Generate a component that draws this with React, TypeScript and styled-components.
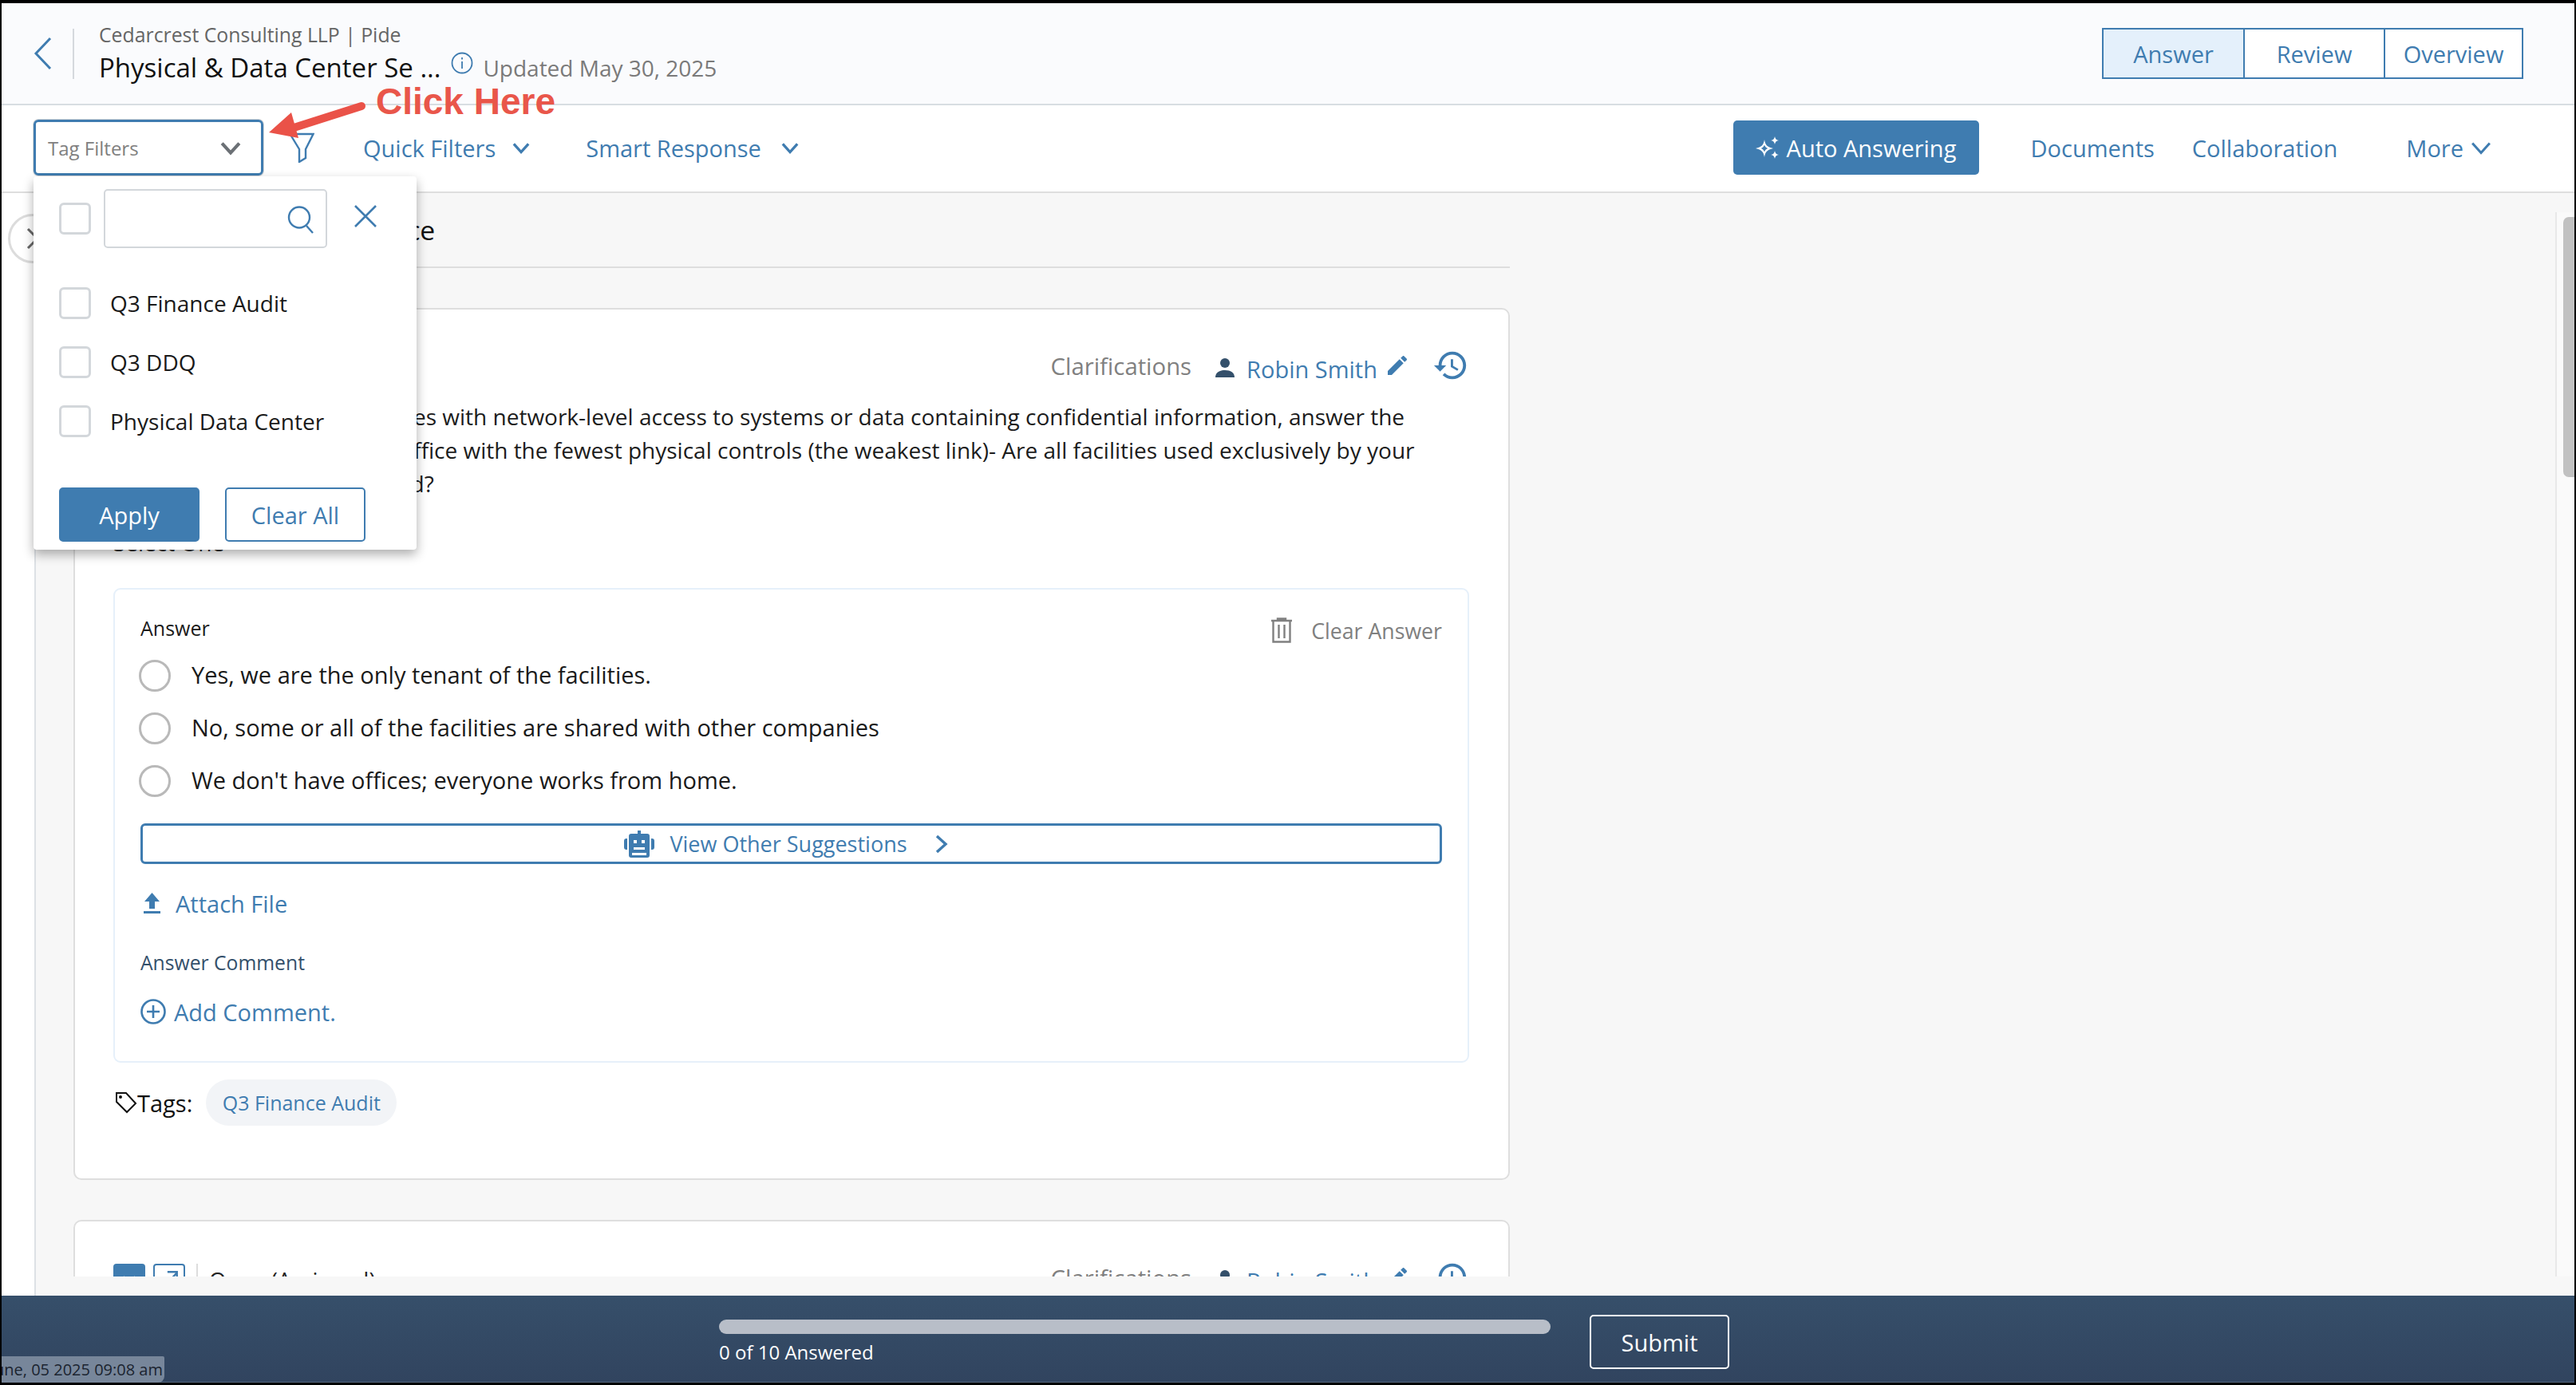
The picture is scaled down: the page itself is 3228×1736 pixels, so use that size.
import React from "react";
import styled, { createGlobalStyle } from "styled-components";

const BLUE = "#3f7cb0";
const NAVY = "#34506b";

const Global = createGlobalStyle`
  html, body { margin: 0; padding: 0; background: #000; }
  * { box-sizing: border-box; }
  body { font-family: "Open Sans", "Liberation Sans", sans-serif; }
`;

const Frame = styled.div`
  position: relative;
  width: 3228px;
  height: 1736px;
  padding: 4px 2px 3px;
  background: #000;
  overflow: hidden;
  display: flex;
  flex-direction: column;
`;

const Header = styled.header`
  flex: 0 0 128px;
  display: flex;
  align-items: center;
  background: #fafbfd;
  border-bottom: 2px solid #d8dee2;
  padding-left: 40px;
`;
const BackIcon = styled.svg`
  width: 24px;
  height: 42px;
  fill: none;
  stroke: ${BLUE};
  stroke-width: 3;
`;
const HeaderRule = styled.div`
  width: 2px;
  height: 63px;
  margin-left: 25px;
  background: #d5d9dd;
`;
const TitleBlock = styled.div`
  margin-left: 31px;
  display: flex;
  flex-direction: column;
  margin-top: -2px;
`;
const Breadcrumb = styled.div`
  font-size: 24.8px;
  line-height: 30px;
  color: #666;
`;
const TitleRow = styled.div`
  display: flex;
  align-items: center;
  margin-top: 7px;
`;
const Title = styled.div`
  font-size: 33px;
  font-weight: 500;
  line-height: 40px;
  color: #111;
`;
const InfoIcon = styled.svg`
  width: 28px;
  height: 28px;
  margin: -12px 0 0 13px;
  fill: none;
  stroke: ${BLUE};
`;
const Updated = styled.div`
  font-size: 28px;
  line-height: 40px;
  color: #7a7a7a;
  margin-left: 12px;
`;
const Tabs = styled.div`
  margin-left: auto;
  margin-right: 64px;
  height: 64px;
  display: flex;
  border: 2px solid ${BLUE};
`;
const Tab = styled.div<{ $active?: boolean; $w: number }>`
  width: ${(p) => p.$w}px;
  display: flex;
  align-items: center;
  justify-content: center;
  font-size: 29px;
  color: ${BLUE};
  background: ${(p) => (p.$active ? "#e4f0fb" : "#fff")};
  & + & { border-left: 2px solid ${BLUE}; }
`;

const Toolbar = styled.div`
  position: relative;
  flex: 0 0 110px;
  display: flex;
  align-items: center;
  background: #fff;
  border-bottom: 2px solid #dedede;
  padding: 0 104px 2px 40px;
  z-index: 5;
`;
const TagSelect = styled.div`
  width: 288px;
  height: 70px;
  border: 3px solid ${BLUE};
  border-radius: 6px;
  box-shadow: 0 0 0 1px #d9d9d9;
  display: flex;
  align-items: center;
  justify-content: space-between;
  padding: 0 25px 0 15px;
  font-size: 24px;
  color: #808080;
`;
const Chevron = styled.svg<{ $size?: number; $color?: string; $weight?: number }>`
  width: ${(p) => p.$size ?? 22}px;
  height: ${(p) => p.$size ?? 22}px;
  fill: none;
  stroke: ${(p) => p.$color ?? BLUE};
  stroke-width: ${(p) => p.$weight ?? 3.6};
  flex: none;
`;
const FunnelIcon = styled.svg`
  width: 32px;
  height: 38px;
  margin-left: 32px;
  fill: none;
  stroke: ${BLUE};
  stroke-width: 2.4;
`;
const MenuLink = styled.div<{ $left: number; $gap?: number }>`
  margin-left: ${(p) => p.$left}px;
  display: flex;
  align-items: center;
  gap: ${(p) => p.$gap ?? 21}px;
  font-size: 29px;
  font-weight: 500;
  color: ${BLUE};
`;
const AutoButton = styled.button`
  margin-left: auto;
  width: 308px;
  height: 68px;
  border: none;
  border-radius: 5px;
  background: ${BLUE};
  color: #fff;
  font: 500 29px "Open Sans", sans-serif;
  display: flex;
  align-items: center;
  gap: 9px;
  padding: 0 0 0 28px;
`;
const SparkIcon = styled.svg`
  width: 30px;
  height: 30px;
  fill: #fff;
  flex: none;
`;

const Popup = styled.div`
  position: absolute;
  left: 40px;
  top: 89px;
  width: 480px;
  height: 468px;
  background: #fff;
  border-radius: 4px;
  box-shadow: 0 6px 14px rgba(0, 0, 0, 0.32);
  padding: 16px 32px 0;
  display: flex;
  flex-direction: column;
`;
const SearchRow = styled.div`
  display: flex;
  align-items: center;
  gap: 16px;
`;
const CheckBox = styled.span`
  width: 40px;
  height: 40px;
  flex: none;
  border: 3px solid #d3d7db;
  border-radius: 6px;
  background: #fff;
`;
const SearchBox = styled.div`
  width: 280px;
  height: 74px;
  border: 2px solid #d3d7db;
  border-radius: 5px;
  display: flex;
  align-items: center;
  justify-content: flex-end;
  padding: 2px 13px 0 0;
`;
const LineIcon = styled.svg<{ $w?: number; $h?: number; $sw?: number }>`
  width: ${(p) => p.$w ?? 36}px;
  height: ${(p) => p.$h ?? 36}px;
  fill: none;
  stroke: ${BLUE};
  stroke-width: ${(p) => p.$sw ?? 2.4};
  flex: none;
`;
const CloseSlot = styled.div`
  margin: -6px 0 0 18px;
  display: flex;
`;
const OptionList = styled.div`
  margin-top: 49px;
  display: flex;
  flex-direction: column;
  gap: 34px;
`;
const Option = styled.div`
  display: flex;
  align-items: center;
  gap: 24px;
  height: 40px;
  font-size: 28px;
  color: #1a1a1a;
`;
const PopupActions = styled.div`
  margin-top: 63px;
  display: flex;
  gap: 32px;
`;
const PopupButton = styled.button<{ $solid?: boolean }>`
  width: 176px;
  height: 68px;
  border-radius: 5px;
  border: 2px solid ${BLUE};
  background: ${(p) => (p.$solid ? BLUE : "#fff")};
  color: ${(p) => (p.$solid ? "#fff" : BLUE)};
  font: 500 29px "Open Sans", sans-serif;
`;

const ClickHere = styled.div`
  position: absolute;
  left: 471px;
  top: 104px;
  font: 700 46px/1 "Liberation Sans", Arial, sans-serif;
  color: #e9564a;
  z-index: 10;
`;
const ArrowArt = styled.svg`
  position: absolute;
  left: 330px;
  top: 120px;
  width: 135px;
  height: 60px;
  z-index: 10;
`;

const Main = styled.main`
  position: relative;
  flex: 1;
  min-height: 0;
  display: flex;
  background: #f7f7f7;
`;
const Rail = styled.div`
  flex: 0 0 43px;
  background: #fff;
  border-right: 2px solid #dde1e5;
`;
const CollapseButton = styled.div`
  position: absolute;
  left: 8px;
  top: 26px;
  width: 62px;
  height: 62px;
  border-radius: 50%;
  border: 3px solid #dcdcdc;
  background: #fff;
  display: flex;
  align-items: center;
  padding-left: 20px;
`;
const CollapseGlyph = styled.svg`
  width: 16px;
  height: 28px;
  fill: none;
  stroke: #666;
  stroke-width: 3;
`;
const Pane = styled.div`
  flex: 1;
  min-width: 0;
  margin-bottom: 24px;
  padding-left: 47px;
  overflow: hidden;
`;
const Column = styled.div`
  width: 1800px;
`;
const SectionHeading = styled.h2`
  margin: 0 0 50px;
  height: 94px;
  padding: 24px 0 0 0;
  border-bottom: 2px solid #dedede;
  font-size: 33.7px;
  line-height: 44px;
  font-weight: 500;
  color: #111;
`;
const Card = styled.section`
  background: #fff;
  border: 2px solid #dedede;
  border-radius: 10px;
  padding: 53px 49px 66px 48px;
  margin-bottom: 50px;
`;
const CardHeader = styled.div`
  height: 40px;
  display: flex;
  align-items: center;
`;
const BlueSquare = styled.span`
  width: 40px;
  height: 40px;
  border-radius: 4px;
  background: ${BLUE};
  display: flex;
  align-items: center;
  justify-content: center;
`;
const OpenBox = styled.span`
  width: 40px;
  height: 40px;
  margin-left: 10px;
  border: 2px solid ${BLUE};
  border-radius: 4px;
  display: flex;
  align-items: center;
  justify-content: center;
`;
const StatusRule = styled.span`
  width: 2px;
  height: 40px;
  margin: 0 14px;
  background: #ddd;
`;
const StatusText = styled.span`
  font-size: 27.5px;
  color: #222;
`;
const Clarifications = styled.span`
  margin-left: auto;
  font-size: 29.3px;
  color: #808080;
  margin-top: -4px;
`;
const PersonIcon = styled.svg`
  width: 26px;
  height: 26px;
  margin-left: 29px;
  fill: ${NAVY};
`;
const AssigneeName = styled.span`
  margin-left: 14px;
  font-size: 29px;
  font-weight: 500;
  color: ${BLUE};
  margin-top: 2px;
`;
const PencilIcon = styled.svg`
  width: 32px;
  height: 32px;
  margin: -6px 0 0 9px;
  fill: ${BLUE};
`;
const HistoryIcon = styled.svg`
  width: 46px;
  height: 46px;
  margin: -6px 0 0 28px;
  fill: ${BLUE};
`;
const Question = styled.p`
  margin: 20px 0 0;
  white-space: nowrap;
  font-size: 28px;
  line-height: 42px;
  color: #1c1c1c;
`;
const SelectOne = styled.div`
  margin-top: 36px;
  font-size: 28px;
  line-height: 35px;
  color: #333;
`;
const AnswerBox = styled.div`
  margin-top: 39px;
  border: 2px solid #e6f0fa;
  border-radius: 9px;
  padding: 28px 32px 44px;
`;
const AnswerTop = styled.div`
  height: 40px;
  display: flex;
  align-items: center;
  justify-content: space-between;
`;
const AnswerLabel = styled.div`
  font-size: 25px;
  font-weight: 500;
  color: #1a1a1a;
`;
const ClearAnswer = styled.div`
  display: flex;
  align-items: center;
  gap: 23px;
  font-size: 26.7px;
  color: #808080;
  margin-top: 6px;
`;
const RadioList = styled.div`
  margin-top: 7px;
`;
const RadioRow = styled.div`
  height: 66px;
  display: flex;
  align-items: center;
  gap: 26px;
  margin-left: -2px;
`;
const RadioLabel = styled.span`
  margin-top: -3px;
  font-size: 29px;
  font-weight: 500;
  color: #1a1a1a;
`;
const RadioDot = styled.span`
  width: 40px;
  height: 40px;
  border-radius: 50%;
  border: 3px solid #b9b9b9;
  background: #fff;
`;
const SuggestButton = styled.div`
  margin-top: 20px;
  height: 51px;
  border: 3px solid ${BLUE};
  border-radius: 6px;
  display: flex;
  align-items: center;
  justify-content: center;
  gap: 19px;
  padding-right: 13px;
  font-size: 27px;
  font-weight: 500;
  color: ${BLUE};
`;
const SuggestChevron = styled.svg`
  width: 17px;
  height: 24px;
  margin-left: 15px;
  fill: none;
  stroke: ${BLUE};
  stroke-width: 3.4;
  flex: none;
`;
const BlueIcon = styled.svg<{ $w: number; $h: number }>`
  width: ${(p) => p.$w}px;
  height: ${(p) => p.$h}px;
  fill: ${BLUE};
  flex: none;
`;
const AttachRow = styled.div`
  margin-top: 29px;
  height: 40px;
  display: flex;
  align-items: center;
  gap: 19px;
  padding-left: 4px;
  font-size: 29px;
  font-weight: 500;
  color: ${BLUE};
`;
const CommentLabel = styled.div`
  margin-top: 39px;
  font-size: 24.7px;
  line-height: 32px;
  font-weight: 500;
  color: ${NAVY};
`;
const AddComment = styled.div`
  margin-top: 27px;
  height: 36px;
  display: flex;
  align-items: center;
  gap: 10px;
  font-size: 29px;
  font-weight: 500;
  color: ${BLUE};
`;
const TagsRow = styled.div`
  margin-top: 21px;
  display: flex;
  align-items: center;
  padding-left: 2px;
`;
const TagIcon = styled.svg`
  width: 28px;
  height: 28px;
  fill: none;
  stroke: #111;
  stroke-width: 2;
`;
const TagsLabel = styled.span`
  font-size: 29px;
  font-weight: 500;
  color: #111;
`;
const TagPill = styled.span`
  margin-left: 17px;
  height: 58px;
  width: 239px;
  border-radius: 29px;
  background: #f2f4f7;
  display: flex;
  align-items: center;
  justify-content: center;
  font-size: 25px;
  color: ${BLUE};
`;
const ScrollTrack = styled.div`
  flex: 0 0 22px;
  margin: 24px 0 24px;
  padding: 6px 0 0 8px;
  background: #fafafa;
  border-left: 2px solid #e8e8e8;
`;
const ScrollThumb = styled.div`
  width: 14px;
  height: 326px;
  border-radius: 7px 0 0 7px;
  background: #c1c1c1;
`;

const Footer = styled.footer`
  position: relative;
  flex: 0 0 109px;
  display: flex;
  align-items: flex-start;
  padding: 24px 0 0 899px;
  background: linear-gradient(#364f6a, #31445f);
  border-bottom: 1px solid #56697f;
`;
const ProgressBlock = styled.div`
  width: 1042px;
  margin-top: 6px;
`;
const ProgressBar = styled.div`
  height: 18px;
  border-radius: 9px;
  background: #b8bec8;
`;
const ProgressText = styled.div`
  margin-top: 7px;
  font-size: 24px;
  line-height: 32px;
  font-weight: 500;
  color: #fff;
`;
const SubmitButton = styled.button`
  margin-left: 49px;
  width: 175px;
  height: 68px;
  border: 2px solid #fff;
  border-radius: 5px;
  background: transparent;
  color: #fff;
  font: 500 29px "Open Sans", sans-serif;
`;
const Timestamp = styled.div`
  position: absolute;
  left: 0;
  bottom: -1px;
  width: 204px;
  height: 33px;
  background: #77869a;
  border-top-right-radius: 2px;
  border-bottom-right-radius: 8px;
  overflow: hidden;
  display: flex;
  justify-content: flex-end;
  align-items: center;
  white-space: nowrap;
  padding-right: 2px;
  font-size: 20px;
  color: #1b2430;
`;

const ChevronDown = (p: { size?: number; color?: string; weight?: number }) => (
  <Chevron viewBox="0 0 24 24" $size={p.size} $color={p.color} $weight={p.weight}>
    <path d="M2 7l10 11L22 7" />
  </Chevron>
);

const CardHead = () => (
  <CardHeader>
    <BlueSquare>
      <svg width="22" height="22" viewBox="0 0 24 24" fill="none" stroke="#fff" strokeWidth="3">
        <path d="M4 8l8 9 8-9" />
      </svg>
    </BlueSquare>
    <OpenBox>
      <LineIcon viewBox="0 0 24 24" $w={26} $h={26} $sw={2.2}>
        <path d="M5 21L21 4M10 3h11v11" />
      </LineIcon>
    </OpenBox>
    <StatusRule />
    <StatusText>Open (Assigned)</StatusText>
    <Clarifications>Clarifications</Clarifications>
    <PersonIcon viewBox="0 0 26 26">
      <circle cx="13" cy="7" r="6" />
      <path d="M1 25c0-6 5-9 12-9s12 3 12 9z" />
    </PersonIcon>
    <AssigneeName>Robin Smith</AssigneeName>
    <PencilIcon viewBox="0 0 24 24">
      <path d="M3 17.25V21h3.75L17.81 9.94l-3.75-3.75L3 17.25zM20.71 7.04c.39-.39.39-1.02 0-1.41l-2.34-2.34c-.39-.39-1.02-.39-1.41 0l-1.83 1.83 3.75 3.75 1.83-1.83z" />
    </PencilIcon>
    <HistoryIcon viewBox="0 0 24 24">
      <path d="M13 3c-4.97 0-9 4.03-9 9H1l3.89 3.89.07.14L9 12H6c0-3.87 3.13-7 7-7s7 3.13 7 7-3.13 7-7 7c-1.93 0-3.68-.79-4.94-2.06l-1.42 1.42C8.27 19.99 10.51 21 13 21c4.97 0 9-4.03 9-9s-4.03-9-9-9zm-1 5v5l4.28 2.54.72-1.21-3.5-2.08V8H12z" />
    </HistoryIcon>
  </CardHeader>
);

export default function App() {
  return (
    <Frame>
      <Global />
      <Header>
        <BackIcon viewBox="0 0 24 42">
          <path d="M21 2L3 21l18 19" />
        </BackIcon>
        <HeaderRule />
        <TitleBlock>
          <Breadcrumb>Cedarcrest Consulting LLP | Pide</Breadcrumb>
          <TitleRow>
            <Title>Physical &amp; Data Center Se ...</Title>
            <InfoIcon viewBox="0 0 28 28" strokeWidth="1.8">
              <circle cx="14" cy="14" r="12.5" />
              <path d="M14 12v9M14 7v2.5" />
            </InfoIcon>
            <Updated>Updated May 30, 2025</Updated>
          </TitleRow>
        </TitleBlock>
        <Tabs>
          <Tab $active $w={175}>Answer</Tab>
          <Tab $w={176}>Review</Tab>
          <Tab $w={173}>Overview</Tab>
        </Tabs>
      </Header>

      <Toolbar>
        <TagSelect>
          Tag Filters
          <ChevronDown size={26} color="#6b7075" weight={3.8} />
        </TagSelect>
        <FunnelIcon viewBox="0 0 32 38">
          <path d="M1.5 2h29L21 21v11l-8 5V21z" />
        </FunnelIcon>
        <MenuLink $left={61}>
          Quick Filters
          <ChevronDown />
        </MenuLink>
        <MenuLink $left={70} $gap={25}>
          Smart Response
          <ChevronDown />
        </MenuLink>
        <AutoButton>
          <SparkIcon viewBox="0 0 30 30">
            <path fillRule="evenodd" d="M11 5c1 6.500 3.500 9.500 11 11-7.500 1.500-10 4.500-11 11-1-6.500-3.500-9.500-11-11 7.500-1.500 10-4.500 11-11zM11 11.500c-.7 2.200-2 3.600-4.300 4.500 2.300.9 3.600 2.300 4.300 4.500.7-2.200 2-3.600 4.300-4.500-2.300-.9-3.600-2.300-4.300-4.500z" />
            <path d="M24 1c.6 3.200 1.800 4.400 5 5-3.200.6-4.400 1.800-5 5-.6-3.200-1.800-4.400-5-5 3.200-.6 4.400-1.800 5-5zM24 19c.6 3.200 1.800 4.400 5 5-3.200.6-4.400 1.800-5 5-.6-3.200-1.800-4.400-5-5 3.200-.6 4.400-1.800 5-5z" />
          </SparkIcon>
          Auto Answering
        </AutoButton>
        <MenuLink $left={65}>Documents</MenuLink>
        <MenuLink $left={47}>Collaboration</MenuLink>
        <MenuLink $left={86} $gap={9}>
          More
          <ChevronDown size={26} weight={2.8} />
        </MenuLink>

        <Popup>
          <SearchRow>
            <CheckBox />
            <SearchBox>
              <LineIcon viewBox="0 0 36 36">
                <circle cx="16" cy="15.500" r="13" />
                <path d="M25 26l8 9" />
              </LineIcon>
            </SearchBox>
            <CloseSlot>
              <LineIcon viewBox="0 0 28 28" $w={28} $h={28} $sw={2.6}>
                <path d="M1 1l26 26M27 1L1 27" />
              </LineIcon>
            </CloseSlot>
          </SearchRow>
          <OptionList>
            <Option><CheckBox />Q3 Finance Audit</Option>
            <Option><CheckBox />Q3 DDQ</Option>
            <Option><CheckBox />Physical Data Center</Option>
          </OptionList>
          <PopupActions>
            <PopupButton $solid>Apply</PopupButton>
            <PopupButton>Clear All</PopupButton>
          </PopupActions>
        </Popup>
      </Toolbar>

      <Main>
        <Rail />
        <CollapseButton>
          <CollapseGlyph viewBox="0 0 16 28">
            <path d="M2 2l12 12L2 26" />
          </CollapseGlyph>
        </CollapseButton>
        <Pane>
          <Column>
            <SectionHeading>Physical Security Compliance</SectionHeading>
            <Card>
              <CardHead />
              <Question>
                For all of your physical facilities with network-level access to systems or data containing confidential information, answer the
                <br />
                questions, for that physical office with the fewest physical controls (the weakest link)- Are all facilities used exclusively by your
                <br />
                company, or are these shared?
              </Question>
              <SelectOne>Select One</SelectOne>
              <AnswerBox>
                <AnswerTop>
                  <AnswerLabel>Answer</AnswerLabel>
                  <ClearAnswer>
                    <svg width="28" height="32" viewBox="0 0 28 32" fill="none" stroke="#808080" strokeWidth="2.4">
                      <path d="M1 4h26M3.500 4v26.500h21V4M10.500 9v17M17.500 9v17M9 3.500V1.500h10v2" />
                    </svg>
                    Clear Answer
                  </ClearAnswer>
                </AnswerTop>
                <RadioList>
                  <RadioRow><RadioDot /><RadioLabel>Yes, we are the only tenant of the facilities.</RadioLabel></RadioRow>
                  <RadioRow><RadioDot /><RadioLabel>No, some or all of the facilities are shared with other companies</RadioLabel></RadioRow>
                  <RadioRow><RadioDot /><RadioLabel>We don't have offices; everyone works from home.</RadioLabel></RadioRow>
                </RadioList>
                <SuggestButton>
                  <BlueIcon viewBox="0 0 38 34" $w={38} $h={34}>
                    <path fillRule="evenodd" d="M17 0h4v4h8a3 3 0 0 1 3 3v24a3 3 0 0 1-3 3H9a3 3 0 0 1-3-3V7a3 3 0 0 1 3-3h8zM12 12v4h4v-4zM22 12v4h4v-4zM12 21v3h14v-3zM10 28v3h18v-3z" />
                    <path d="M0 13a3 3 0 0 1 3-3h1v14H3a3 3 0 0 1-3-3zM38 13a3 3 0 0 0-3-3h-1v14h1a3 3 0 0 0 3-3z" />
                  </BlueIcon>
                  View Other Suggestions
                  <SuggestChevron viewBox="0 0 17 24">
                    <path d="M3 2l11 10L3 22" />
                  </SuggestChevron>
                </SuggestButton>
                <AttachRow>
                  <BlueIcon viewBox="0 0 21 26" $w={21} $h={26}>
                    <path d="M10.500 0L20 11h-6v9H7v-9H1zM0 23h21v3H0z" />
                  </BlueIcon>
                  Attach File
                </AttachRow>
                <CommentLabel>Answer Comment</CommentLabel>
                <AddComment>
                  <LineIcon viewBox="0 0 32 32" $w={32} $h={32} $sw={2.6}>
                    <circle cx="16" cy="16" r="14.500" />
                    <path d="M16 8v16M8 16h16" />
                  </LineIcon>
                  Add Comment.
                </AddComment>
              </AnswerBox>
              <TagsRow>
                <TagIcon viewBox="0 0 28 28">
                  <path d="M2 2h12l12 13-11 11L2 13z" />
                  <circle cx="7" cy="7" r="1" fill="#111" />
                </TagIcon>
                <TagsLabel>Tags:</TagsLabel>
                <TagPill>Q3 Finance Audit</TagPill>
              </TagsRow>
            </Card>
            <Card>
              <CardHead />
            </Card>
          </Column>
        </Pane>
        <ScrollTrack>
          <ScrollThumb />
        </ScrollTrack>
      </Main>

      <Footer>
        <ProgressBlock>
          <ProgressBar />
          <ProgressText>0 of 10 Answered</ProgressText>
        </ProgressBlock>
        <SubmitButton>Submit</SubmitButton>
        <Timestamp>June, 05 2025 09:08 am</Timestamp>
      </Footer>

      <ClickHere>Click Here</ClickHere>
      <ArrowArt viewBox="0 0 135 60">
        <path d="M123 13L32 42" stroke="#ea5248" strokeWidth="10" strokeLinecap="round" fill="none" />
        <path d="M7 46L35 21l9 32z" fill="#ea5248" />
      </ArrowArt>
    </Frame>
  );
}
